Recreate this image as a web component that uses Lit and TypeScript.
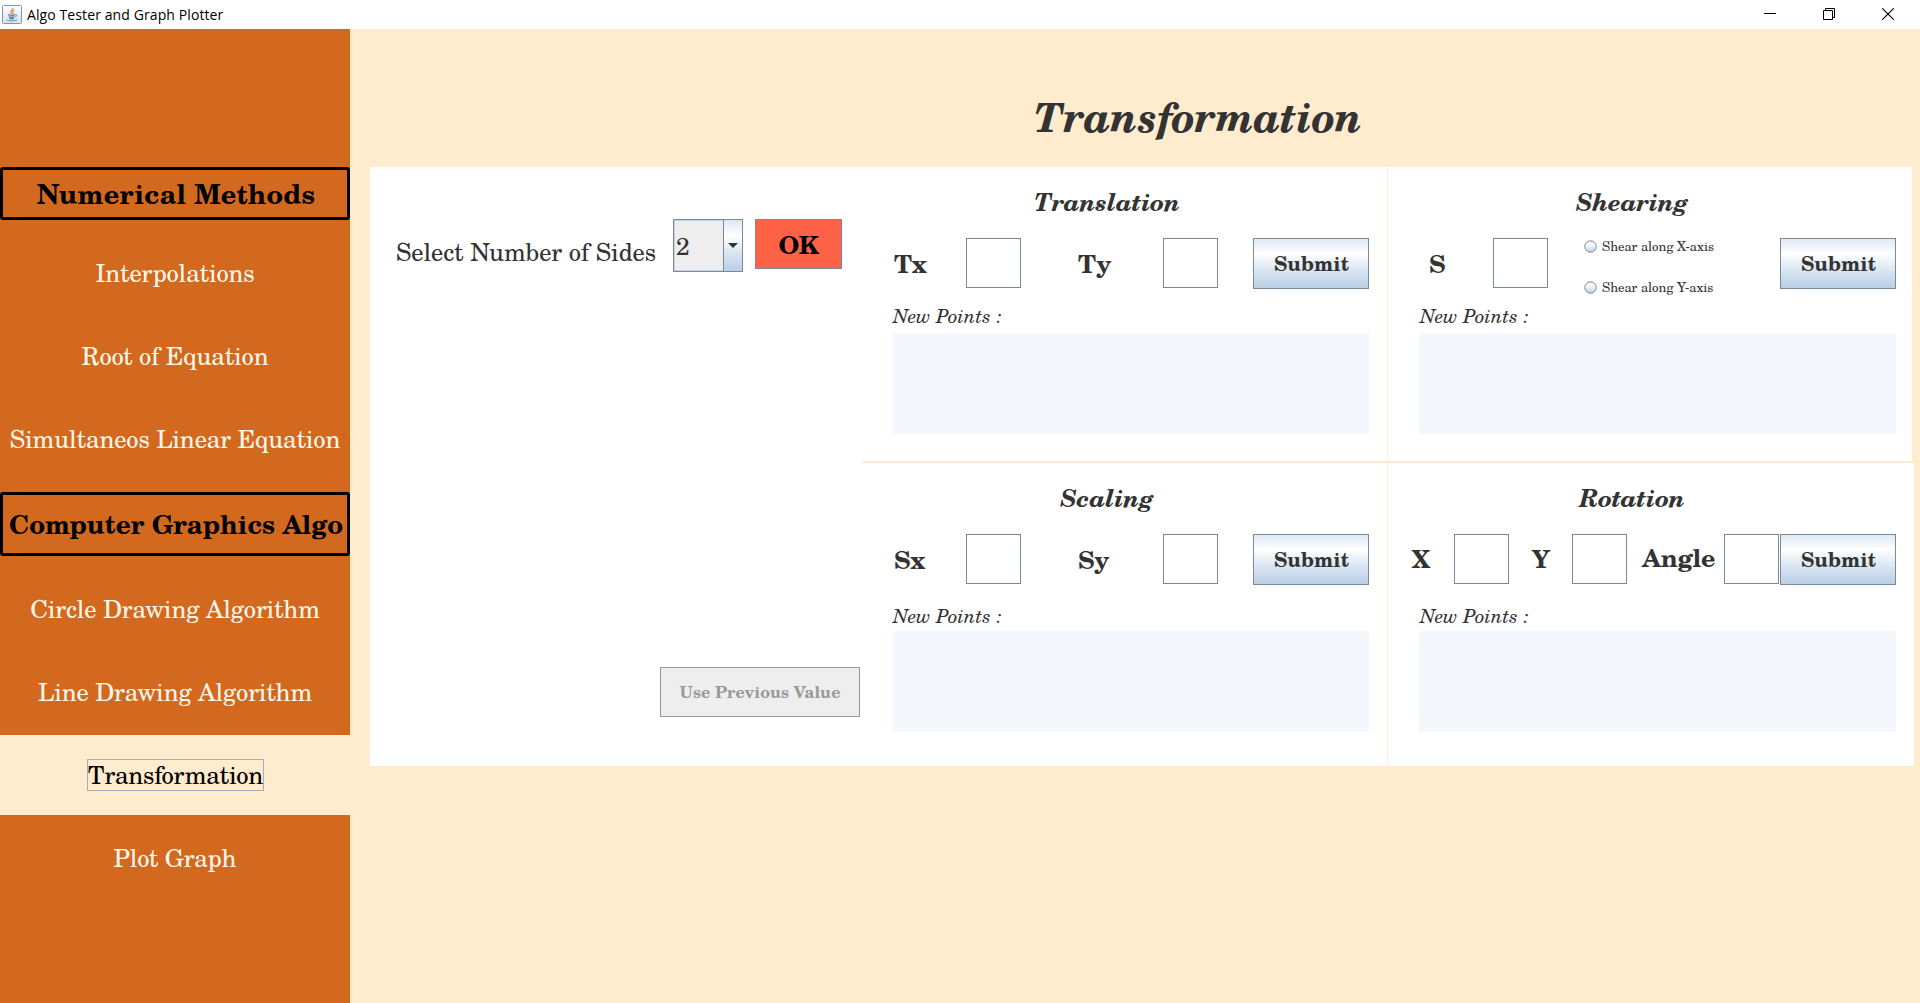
import { LitElement, html, css, nothing } from "lit";
import { customElement, property } from "lit/decorators.js";
import { classMap } from "lit/directives/class-map.js";

interface Field {
  label: string;
  cls: string;
}

interface PanelSpec {
  title: string;
  kind: string;
  fields: Field[];
  options?: string[];
}

const NUMERICAL = ["Interpolations", "Root of Equation", "Simultaneos Linear Equation"];
const GRAPHICS = ["Circle Drawing Algorithm", "Line Drawing Algorithm", "Transformation", "Plot Graph"];

const TOP: PanelSpec[] = [
  { title: "Translation", kind: "pair", fields: [{ label: "Tx", cls: "first" }, { label: "Ty", cls: "second" }] },
  {
    title: "Shearing",
    kind: "shear",
    fields: [{ label: "S", cls: "factor" }],
    options: ["Shear along X-axis", "Shear along Y-axis"],
  },
];

const BOTTOM: PanelSpec[] = [
  { title: "Scaling", kind: "pair", fields: [{ label: "Sx", cls: "first" }, { label: "Sy", cls: "second" }] },
  {
    title: "Rotation",
    kind: "rotate",
    fields: [{ label: "X", cls: "x" }, { label: "Y", cls: "y" }, { label: "Angle", cls: "angle" }],
  },
];

@customElement("title-bar")
class TitleBar extends LitElement {
  static styles = css`
    :host {
      display: flex;
      align-items: center;
      box-sizing: border-box;
      height: 29px;
      padding: 0 26px 0 2px;
      background: #fff;
      color: #000;
      font: 14px/20px "Segoe UI", "Open Sans", sans-serif;
    }
    .logo {
      width: 20px;
      height: 19px;
      margin: 0 5px 1px 0;
    }
    .name {
      flex: 1;
      letter-spacing: 0.1px;
    }
    .controls {
      display: flex;
      gap: 47px;
      margin-bottom: 1px;
    }
    .controls svg {
      width: 12px;
      height: 12px;
    }
  `;

  render() {
    return html`
      <svg class="logo" viewBox="0 0 20 19" fill="none">
        <defs>
          <linearGradient id="face" x1="0" y1="0" x2="0" y2="1">
            <stop offset="0" stop-color="#fdfeff" />
            <stop offset="1" stop-color="#d6e3ee" />
          </linearGradient>
        </defs>
        <rect x=".5" y=".5" width="19" height="18" rx="1.2" fill="url(#face)" stroke="#8296a8" />
        <path d="M10.6 2.6c1.2 1.8-2.6 2.9-1.9 4.6.3.8 1 1.1 1.3 1.8M12.4 5c-1.7.6-2.2 1.5-1.5 2.5.5.7.2 1.2-.2 1.6" stroke="#e3893f" stroke-width="1.2" />
        <path d="M6 9.700c1.800.7 5.700.7 7.400 0M6.800 11.700c1.500.6 4.100.6 5.500 0M7.300 13.300c1.300.5 3.300.5 4.500 0" stroke="#5a83a8" stroke-width="1.300" />
        <path d="M13.500 9.600c1.900-.3 1.800 1.900-.5 2.600M4.500 14.900c2.200 1.300 8.500 1.300 10.700 0" stroke="#6d92b3" />
      </svg>
      <span class="name">Algo Tester and Graph Plotter</span>
      <div class="controls">
        <svg viewBox="0 0 12 12" stroke="#000"><path d="M0 5.500h12" /></svg>
        <svg viewBox="0 0 12 12" fill="none" stroke="#000">
          <path d="M.5 2.500h9v9h-9zM2.500 2.500v-2h9v9h-2" />
        </svg>
        <svg viewBox="0 0 12 12" stroke="#000" stroke-width="1.1"><path d="M.3.3l11.400 11.400M11.700.3L.3 11.700" /></svg>
      </div>
    `;
  }
}

@customElement("side-menu")
class SideMenu extends LitElement {
  static styles = css`
    :host {
      display: flex;
      flex-direction: column;
      box-sizing: border-box;
      width: 350px;
      padding-top: 138px;
      background: #d2691e;
      white-space: nowrap;
    }
    .group {
      display: flex;
      align-items: center;
      justify-content: center;
      box-sizing: border-box;
      padding-left: 2px;
      border: 3px solid #000;
      border-radius: 3px;
      color: #000;
      font-weight: bold;
    }
    .numerical {
      height: 53px;
      padding-bottom: 2px;
      font-size: 27px;
      letter-spacing: 0.25px;
    }
    .graphics {
      height: 64px;
      font-size: 26px;
    }
    .items {
      display: flex;
      flex-direction: column;
      gap: 3px;
      padding: 13px 0;
    }
    .item {
      display: flex;
      align-items: center;
      justify-content: center;
      height: 80px;
      color: #fff6ea;
      font-size: 24.5px;
      letter-spacing: -0.18px;
    }
    .item.active {
      background: #ffebcd;
      color: #000;
      letter-spacing: -0.25px;
    }
    .caption {
      padding-bottom: 2px;
      border: 1px solid transparent;
      line-height: 28px;
    }
    .active .caption {
      margin-left: 1px;
      border-color: #a3b0bc;
    }
  `;

  private items(labels: string[]) {
    return html`<div class="items">
      ${labels.map(
        (label) => html`<div class=${classMap({ item: true, active: label === "Transformation" })}>
          <span class="caption">${label}</span>
        </div>`
      )}
    </div>`;
  }

  render() {
    return html`
      <div class="group numerical">Numerical Methods</div>
      ${this.items(NUMERICAL)}
      <div class="group graphics">Computer Graphics Algo</div>
      ${this.items(GRAPHICS)}
    `;
  }
}

@customElement("transform-panel")
class TransformPanel extends LitElement {
  @property({ attribute: false }) spec!: PanelSpec;

  static styles = css`
    :host {
      display: block;
      box-sizing: border-box;
      width: 524px;
      background: #fff;
      color: #333;
      white-space: nowrap;
    }
    .title {
      display: flex;
      align-items: center;
      justify-content: center;
      box-sizing: border-box;
      height: 71px;
      padding: 0 36px 2px 0;
      font-size: 24px;
      font-weight: bold;
      font-style: italic;
      letter-spacing: -0.25px;
    }
    .row {
      display: flex;
      height: 51px;
    }
    .label {
      display: flex;
      align-items: center;
      box-sizing: border-box;
      padding-bottom: 2px;
      font-size: 25px;
      font-weight: bold;
      line-height: 30px;
      letter-spacing: -0.4px;
    }
    .first {
      width: 103px;
      padding-left: 31px;
    }
    .second {
      width: 142px;
      padding-left: 57px;
    }
    .factor {
      width: 105px;
      padding-left: 41px;
    }
    .x {
      width: 66px;
      padding: 0 0 3px 24px;
    }
    .y {
      width: 63px;
      padding: 0 0 3px 23px;
    }
    .angle {
      width: 97px;
      padding: 0 0 5px 15px;
      letter-spacing: -0.25px;
    }
    .field {
      box-sizing: border-box;
      width: 55px;
      height: 50px;
      border: 1px solid #7a8a99;
      background: #fff;
    }
    .submit {
      display: flex;
      align-items: center;
      justify-content: center;
      box-sizing: border-box;
      width: 116px;
      margin: 0 16px 0 auto;
      padding: 0 0 2px 1px;
      border: 1px solid #7a8a99;
      background: linear-gradient(#dde8f3, #fff 30%, #dde8f3 60%, #b8cfe5);
      font-size: 20px;
      font-weight: bold;
    }
    .pair .submit {
      margin-right: 18px;
    }
    .options {
      display: flex;
      flex-direction: column;
      justify-content: space-between;
      margin: -3px 0 -9px 36px;
      font-size: 13px;
      line-height: 22px;
      letter-spacing: -0.06px;
    }
    .option {
      display: flex;
      align-items: center;
      gap: 5px;
    }
    .option svg {
      width: 13px;
      height: 13px;
    }
    .notes {
      box-sizing: border-box;
      height: 44px;
      padding: 15px 0 0 30px;
      font-size: 19px;
      font-style: italic;
      line-height: 24px;
    }
    .area {
      width: 477px;
      height: 101px;
      margin-left: 29px;
      background: #f4f7fc;
    }
    .shear .notes,
    .rotate .notes {
      padding-left: 32px;
    }
    .shear .area,
    .rotate .area {
      margin-left: 31px;
    }
    :host([lower]) .notes {
      height: 46px;
      padding-top: 19px;
    }
  `;

  render() {
    const { title, kind, fields, options } = this.spec;
    return html`<div class=${kind}>
      <div class="title">${title}</div>
      <div class="row">
        ${fields.map((f) => html`<span class="label ${f.cls}">${f.label}</span><span class="field"></span>`)}
        ${options
          ? html`<div class="options">
              ${options.map(
                (option) => html`<span class="option">
                  <svg viewBox="0 0 13 13">
                    <defs>
                      <linearGradient id="knob" x1="0" y1="0" x2="0" y2="1">
                        <stop offset="0" stop-color="#dde8f3" />
                        <stop offset=".3" stop-color="#fff" />
                        <stop offset="1" stop-color="#b8cfe5" />
                      </linearGradient>
                    </defs>
                    <circle cx="6.5" cy="6.5" r="5.7" fill="url(#knob)" stroke="#7a8a99" />
                  </svg>
                  ${option}
                </span>`
              )}
            </div>`
          : nothing}
        <span class="submit">Submit</span>
      </div>
      <div class="notes">New Points :</div>
      <div class="area"></div>
    </div>`;
  }
}

@customElement("sides-panel")
class SidesPanel extends LitElement {
  static styles = css`
    :host {
      display: flex;
      flex-direction: column;
      justify-content: space-between;
      box-sizing: border-box;
      width: 492px;
      height: 599px;
      padding: 52px 2px 49px 26px;
      background: #fff;
      color: #333;
      white-space: nowrap;
    }
    .row {
      display: flex;
      align-items: flex-start;
    }
    .prompt {
      width: 277px;
      padding-top: 17px;
      font-size: 24.5px;
      line-height: 30px;
      letter-spacing: -0.1px;
    }
    .combo {
      display: flex;
      box-sizing: border-box;
      width: 70px;
      height: 53px;
      margin-right: 12px;
      border: 1px solid #7a8a99;
      background: #eee;
      box-shadow: inset 0 0 0 1px #c3d2e0;
      font-size: 24.5px;
      line-height: 50px;
    }
    .value {
      flex: 1;
      padding-left: 2px;
    }
    .arrow {
      display: flex;
      align-items: center;
      justify-content: center;
      width: 18px;
      border-left: 1px solid #7a8a99;
      background: linear-gradient(#dde8f3, #fff 30%, #dde8f3 60%, #b8cfe5);
    }
    .arrow svg {
      width: 10px;
      height: 5px;
    }
    .ok,
    .previous {
      display: flex;
      align-items: center;
      justify-content: center;
      box-sizing: border-box;
      height: 50px;
      border: 1px solid #7a8a99;
      font-weight: bold;
    }
    .ok {
      width: 87px;
      background: #ff6347;
      color: #000;
      font-size: 25px;
      letter-spacing: -0.5px;
    }
    .previous {
      align-self: flex-end;
      width: 200px;
      padding-bottom: 2px;
      border-color: #999;
      background: #eee;
      color: #999;
      font-size: 16px;
      letter-spacing: 0.05px;
    }
  `;

  render() {
    return html`
      <div class="row">
        <span class="prompt">Select Number of Sides</span>
        <span class="combo">
          <span class="value">2</span>
          <span class="arrow"><svg viewBox="0 0 10 5"><path d="M0 0h10L5 5z" fill="#333" /></svg></span>
        </span>
        <span class="ok">OK</span>
      </div>
      <span class="previous">Use Previous Value</span>
    `;
  }
}

@customElement("app-root")
class AppRoot extends LitElement {
  static styles = css`
    :host {
      display: flex;
      flex-direction: column;
      height: 100vh;
      overflow: hidden;
      background: #ffebcd;
      font-family: "TeX Gyre Schola", "Century Schoolbook", "Liberation Serif", serif;
    }
    .body {
      display: flex;
      flex: 1;
    }
    .main {
      flex: 1;
    }
    .heading {
      display: flex;
      align-items: center;
      justify-content: center;
      box-sizing: border-box;
      height: 138px;
      margin: 0;
      padding: 36px 0 0 126px;
      color: #333;
      font-size: 40px;
      font-style: italic;
    }
    .board {
      display: flex;
      padding-left: 20px;
    }
    .transforms {
      display: flex;
      flex-direction: column;
      gap: 2px;
    }
    .pair {
      display: flex;
      gap: 1px;
      padding-left: 1px;
      background: linear-gradient(90deg, #fff 1px, #fbf0d8 1px);
    }
    .upper {
      width: 1049px;
      height: 294px;
    }
    .lower {
      width: 1051px;
      height: 303px;
    }
    .lower transform-panel:last-child {
      width: 526px;
      padding-right: 2px;
    }
  `;

  render() {
    return html`
      <title-bar></title-bar>
      <div class="body">
        <side-menu></side-menu>
        <div class="main">
          <h1 class="heading">Transformation</h1>
          <div class="board">
            <sides-panel></sides-panel>
            <div class="transforms">
              <div class="pair upper">${TOP.map((p) => html`<transform-panel .spec=${p}></transform-panel>`)}</div>
              <div class="pair lower">${BOTTOM.map((p) => html`<transform-panel lower .spec=${p}></transform-panel>`)}</div>
            </div>
          </div>
        </div>
      </div>
    `;
  }
}
